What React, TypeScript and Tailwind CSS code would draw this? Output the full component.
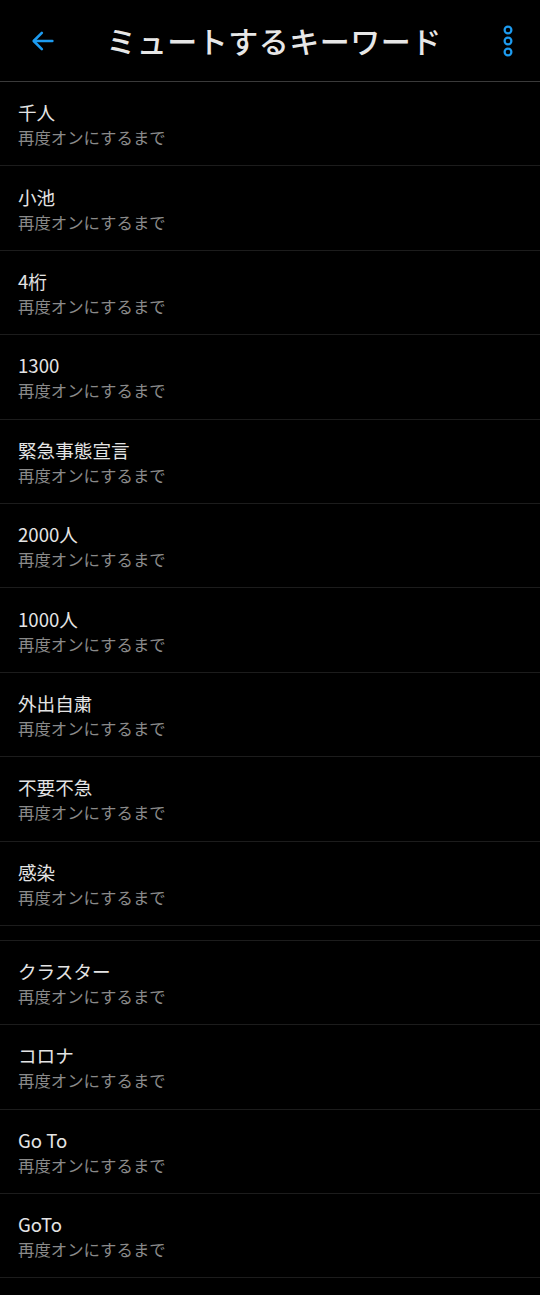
const firstGroup = ['千人', '小池', '4桁', '1300', '緊急事態宣言', '2000人', '1000人', '外出自粛', '不要不急', '感染'];
const secondGroup = ['クラスター', 'コロナ', 'Go To', 'GoTo'];

function KeywordRow({ word }: { word: string }) {
  return (
    <div className="h-[84.4px] border-b border-[#1c1c1c] px-[18px] flex flex-col justify-center">
      <div className="text-[18.6px] leading-[27px] text-[#e4e4e4]">{word}</div>
      <div className="text-[16.4px] leading-[24px] text-[#8a8a8a]">再度オンにするまで</div>
    </div>
  );
}

export default function App() {
  return (
    <div
      className="w-[540px] min-h-[1295px] bg-black"
      style={{ fontFamily: '"Noto Sans CJK JP", "Noto Sans", sans-serif' }}
    >
      {/* ヘッダー */}
      <header className="h-[82px] border-b border-[#3a3a3a] flex items-center">
        <button className="w-[82px] h-[81px] flex items-center justify-center pl-[4px]">
          <svg width="28" height="28" viewBox="0 0 24 24" fill="none" stroke="#1d9bf0" strokeWidth="2.2" strokeLinecap="round" strokeLinejoin="round">
            <path d="M20 12H4.5" />
            <path d="M11 5l-7 7 7 7" />
          </svg>
        </button>
        <h1 className="flex-1 text-center text-[30px] font-medium text-[#e7e7e7] tracking-[0.5px] -ml-[8px]">
          ミュートするキーワード
        </h1>
        <button className="w-[66px] h-[81px] flex items-center justify-center pl-[2px]">
          <svg width="12" height="34" viewBox="0 0 12 34" fill="none" stroke="#1d9bf0" strokeWidth="2.2">
            <circle cx="6" cy="6" r="3.4" />
            <circle cx="6" cy="17" r="3.4" />
            <circle cx="6" cy="28" r="3.4" />
          </svg>
        </button>
      </header>

      <div>
        {firstGroup.map((w) => (
          <KeywordRow key={w} word={w} />
        ))}
      </div>
      <div className="h-[15px] border-b border-[#1c1c1c]" />
      <div>
        {secondGroup.map((w) => (
          <KeywordRow key={w} word={w} />
        ))}
      </div>
    </div>
  );
}
